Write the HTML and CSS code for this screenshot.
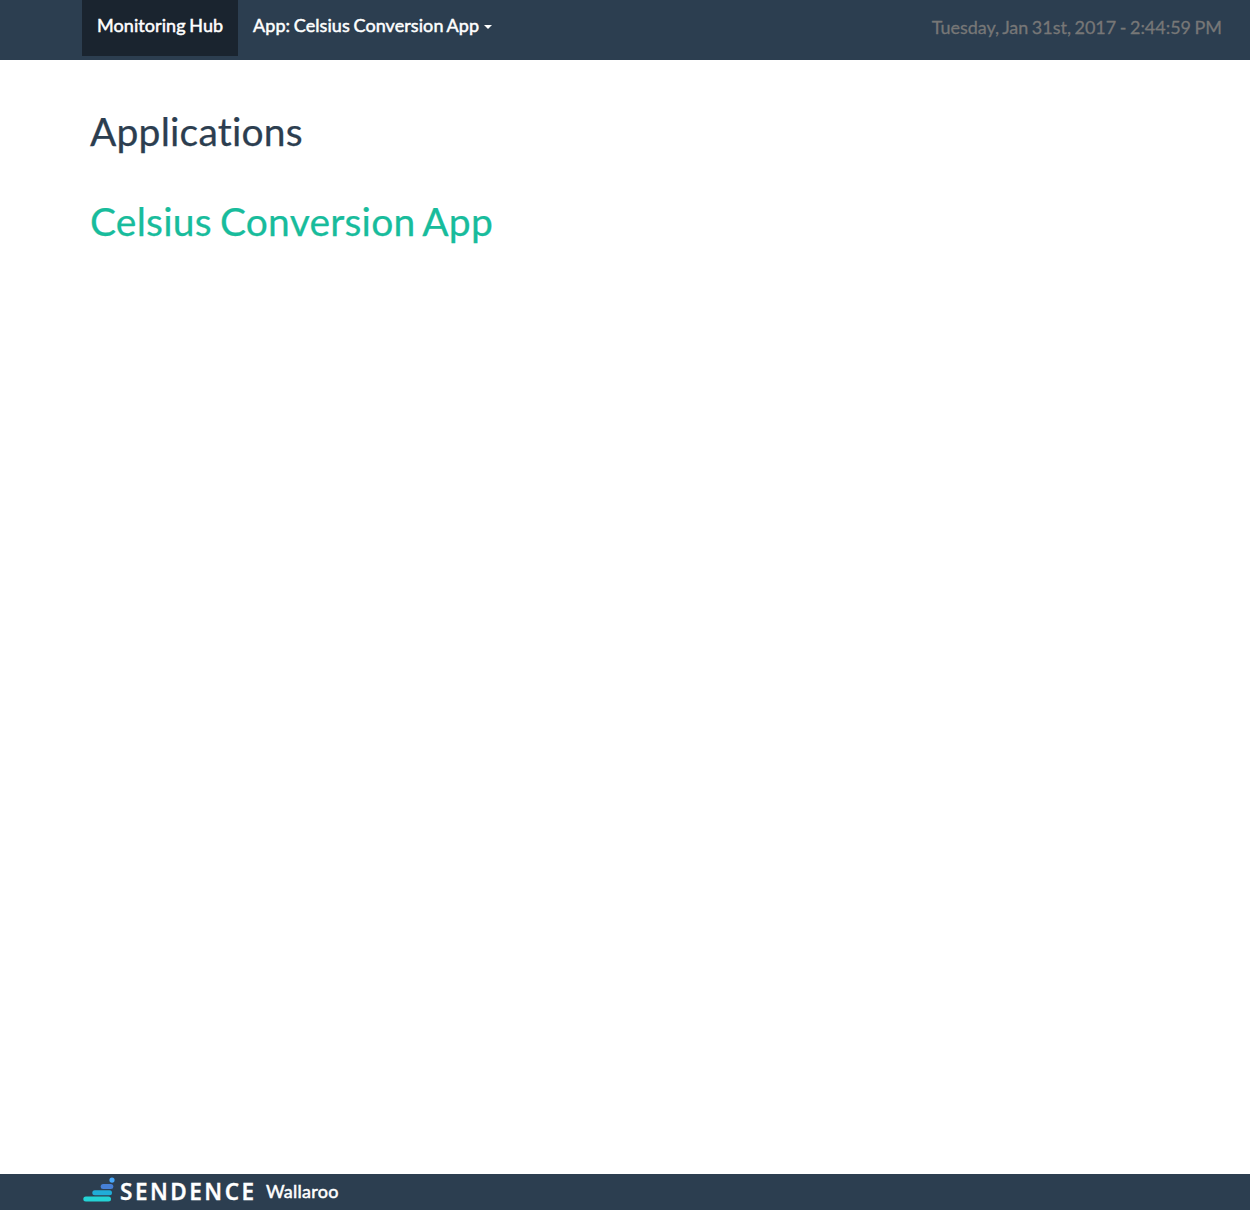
FILE: index.html
```html
<!DOCTYPE html>
<html lang="en">
<head>
<meta charset="utf-8">
<title>Monitoring Hub</title>
<link rel="stylesheet" href="styles.css">
</head>
<body>
<header class="navbar">
  <nav class="nav">
    <a class="nav-item active">Monitoring Hub</a>
    <a class="nav-item">App: Celsius Conversion App<span class="caret"></span></a>
  </nav>
  <time class="clock">Tuesday, Jan 31st, 2017 - 2:44:59 PM</time>
</header>
<main class="content">
  <h1 class="title">Applications</h1>
  <h1 class="title"><a class="app-link">Celsius Conversion App</a></h1>
</main>
<footer class="footer">
  <svg class="logo" width="34" height="36" viewBox="0 0 34 36">
    <g stroke-width="5" stroke-linecap="round">
      <path d="M3.800 25H26.500" stroke="#24d3d5"/>
      <path d="M12.800 18.700H27.500" stroke="#20add8"/>
      <path d="M21.200 12.400H28.800" stroke="#467fd5"/>
    </g>
    <circle cx="30" cy="6.100" r="2.600" fill="#48a8fa"/>
  </svg>
  <span class="brand">SENDENCE</span>
  <span class="product">Wallaroo</span>
</footer>
</body>
</html>
```
FILE: styles.css
```css
* { box-sizing: border-box; }
body {
  margin: 0;
  min-height: 100vh;
  display: flex;
  flex-direction: column;
  background: #fff;
  color: #2c3e50;
  font-family: Lato, sans-serif;
  font-size: 18px;
  font-variant-ligatures: none;
}
.navbar {
  height: 60px;
  padding-left: 82px;
  padding-right: 28px;
  display: flex;
  justify-content: space-between;
  background: #2c3e50;
}
.nav { display: flex; }
.nav-item {
  height: 56px;
  padding: 13px 15px;
  line-height: 25px;
  color: #fff;
  white-space: nowrap;
  letter-spacing: 0.07px;
  word-spacing: -1px;
  -webkit-text-stroke: 0.5px #fff;
}
.active {
  width: 156px;
  background: #1a242f;
}
.caret {
  display: inline-block;
  margin-left: 5px;
  vertical-align: middle;
  border: 4px solid transparent;
  border-top-color: #fff;
  border-bottom: 0;
}
.clock {
  padding-top: 15px;
  line-height: 25px;
  color: #777;
  letter-spacing: -0.03px;
  word-spacing: -1px;
  -webkit-text-stroke: 0.3px #777;
}
.content { flex: 1; padding: 50px 90px; }
.title {
  margin: 0 0 47px;
  font-size: 39px;
  line-height: 43px;
  font-weight: 400;
  letter-spacing: 0.2px;
  word-spacing: -2px;
  -webkit-text-stroke: 0.25px currentColor;
}
.app-link { color: #18bc9c; }
.footer {
  height: 36px;
  padding-left: 82px;
  display: flex;
  background: #2c3e50;
  color: #fff;
  line-height: 35px;
}
.brand {
  margin-left: 4px;
  width: 146px;
  font-family: "Noto Sans", sans-serif;
  font-size: 22.5px;
  line-height: 36px;
  font-weight: 600;
  letter-spacing: 2.5px;
  white-space: nowrap;
  -webkit-text-stroke: 0.3px #fff;
}
.product {
  letter-spacing: 0.25px;
  -webkit-text-stroke: 0.5px #fff;
}
```
